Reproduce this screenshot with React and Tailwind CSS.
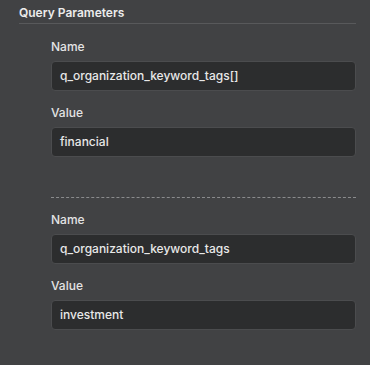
import React from "react";

function Field({ label, value }) {
  return (
    <div className="flex flex-col">
      <div className="h-4 leading-4 text-[12px] font-medium text-[#e4e4e4]">{label}</div>
      <div className="mt-[6px] h-[30px] rounded-[4px] border border-[#4b4c4e] bg-[#2c2d2e] px-2 flex items-center text-[12px] font-medium text-[#e8e8e8]">
        {value}
      </div>
    </div>
  );
}

export default function App() {
  return (
    <div
      className="w-[370px] h-[365px] bg-[#414244] overflow-hidden"
      style={{ fontFamily: "Inter, 'Noto Sans', sans-serif" }}
    >
      <div className="pl-[19px] pr-[14px]">
        <div className="pt-[5px] h-[24px] leading-4 text-[12px] font-semibold text-[#ececec] border-b border-[#58595b]">
          Query Parameters
        </div>
        <div className="pl-[32px]">
          <div className="pt-[15px] flex flex-col gap-[14px]">
            <Field label="Name" value="q_organization_keyword_tags[]" />
            <Field label="Value" value="financial" />
          </div>
          <div className="mt-[40px] border-t border-dashed border-[#8a8b8d]" />
          <div className="pt-[14px] flex flex-col gap-[14px]">
            <Field label="Name" value="q_organization_keyword_tags" />
            <Field label="Value" value="investment" />
          </div>
        </div>
      </div>
    </div>
  );
}
